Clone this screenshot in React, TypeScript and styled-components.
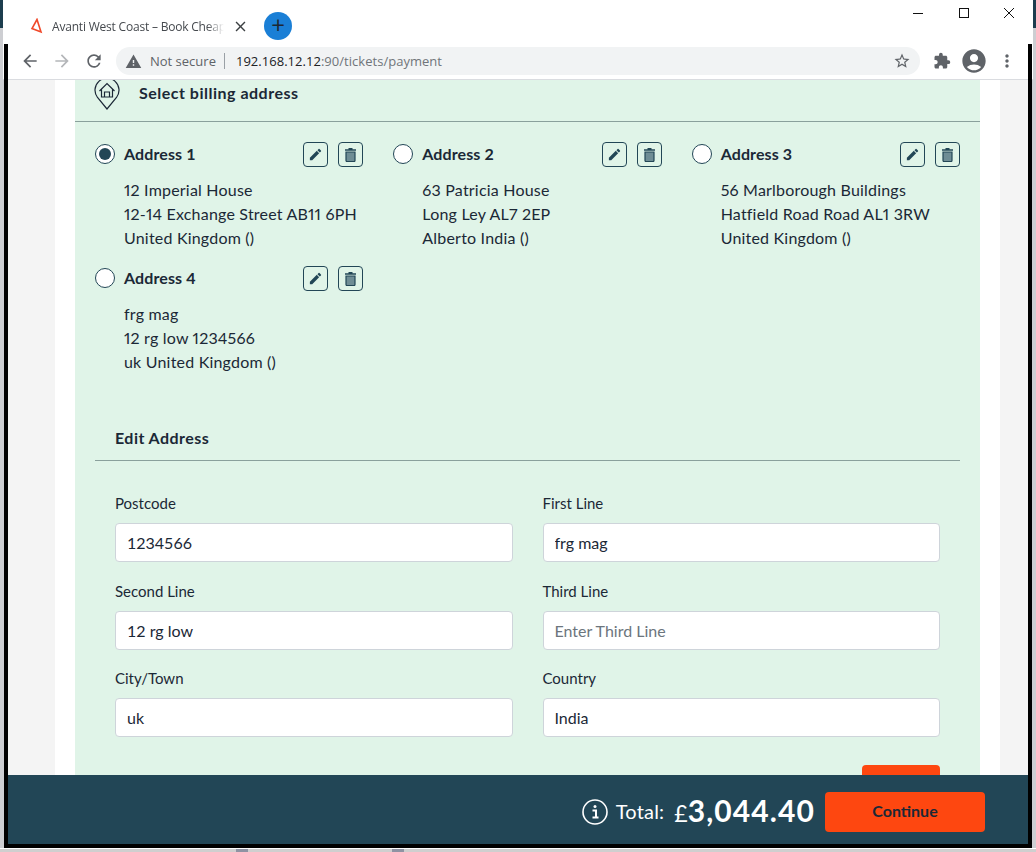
import { createGlobalStyle, styled } from "styled-components";
import {
  MdAccountCircle,
  MdArrowBack,
  MdArrowForward,
  MdClose,
  MdEdit,
  MdExtension,
  MdMoreVert,
  MdRefresh,
  MdStarBorder,
  MdWarning,
} from "react-icons/md";

const GlobalStyle = createGlobalStyle`
  html, body {
    margin: 0;
    padding: 0;
    overflow: hidden;
  }
  * {
    box-sizing: border-box;
  }
`;

const Screen = styled.div`
  position: relative;
  width: 1036px;
  height: 852px;
  overflow: hidden;
  padding: 0 3px;
  display: flex;
  flex-flow: column;
  background: linear-gradient(#1c3d4e 0 28px, #cdced2 28px);
  font-family: Lato, "Liberation Sans", sans-serif;
  color: #1b2836;
`;

/* black window edge, sits over the browser chrome */
const WindowEdge = styled.div`
  position: absolute;
  z-index: 5;
  top: 44px;
  left: 4px;
  width: 1028px;
  height: 804px;
  border: 4px solid #000;
  border-top: none;
  pointer-events: none;
`;

const Chrome = styled.div`
  height: 80px;
  flex: none;
  background: #fff;
  border-bottom: 1px solid #dadce0;
  display: flex;
  flex-flow: column;
`;
const TitleBar = styled.div`
  height: 47px;
  flex: none;
  display: flex;
  align-items: flex-start;
  padding-left: 27px;
`;
const Tab = styled.div`
  width: 220px;
  height: 20px;
  margin-top: 16px;
  display: flex;
  align-items: center;
  gap: 8px;
  font-family: "Open Sans", sans-serif;
  font-size: 12px;
  color: #45494e;
`;
const TabTitle = styled.span`
  width: 172px;
  flex: none;
  overflow: hidden;
  white-space: nowrap;
  letter-spacing: -0.2px;
  -webkit-mask-image: linear-gradient(90deg, #000 90%, transparent);
  mask-image: linear-gradient(90deg, #000 90%, transparent);
`;
const TabClose = styled.span`
  display: flex;
  color: #3c4043;
  font-size: 17px;
`;
const NewTab = styled.div`
  width: 28px;
  height: 28px;
  margin: 12px 0 0 14px;
  border-radius: 50%;
  background: #1a7fd6;
  color: #1d2733;
  font-family: "Open Sans", sans-serif;
  font-size: 24px;
  line-height: 26px;
  text-align: center;
`;
const WindowControls = styled.div`
  margin-left: auto;
  width: 138px;
  height: 26px;
  display: flex;
  align-items: center;
  padding-left: 17px;
  gap: 33.5px;
`;
const NavBar = styled.div`
  height: 28px;
  flex: none;
  display: flex;
  align-items: center;
  padding-left: 17px;
  color: #5f6368;
`;
const NavButton = styled.span<{ $muted?: boolean }>`
  width: 32px;
  display: flex;
  font-size: 20px;
  color: ${(p) => (p.$muted ? "#b4b6b9" : "#5f6368")};
`;
const Omnibox = styled.div`
  width: 804px;
  height: 28px;
  flex: none;
  padding: 0 9px;
  border-radius: 14px;
  background: #f1f3f4;
  display: flex;
  align-items: center;
  font-family: "Open Sans", sans-serif;
  font-size: 13px;
  color: #5f6368;
`;
const NotSecure = styled.span`
  margin-left: 8px;
  padding-right: 8px;
  border-right: 1px solid #9aa0a6;
  line-height: 16px;
`;
const Url = styled.span`
  margin-left: 11px;
  letter-spacing: 0.03px;
  color: #70757a;
  b {
    font-weight: 400;
    color: #202124;
  }
`;
const Star = styled.span`
  margin-left: auto;
  display: flex;
  font-size: 18px;
`;
const Toolbar = styled.div`
  display: flex;
  align-items: center;
  margin-left: 13px;
  gap: 9px;
  font-size: 18px;
`;
const Avatar = styled.span`
  display: flex;
  font-size: 28px;
`;
const MenuDots = styled.span`
  display: flex;
  font-size: 20px;
`;

const Viewport = styled.div`
  flex: 1;
  min-height: 0;
  margin: 0 5px;
  padding: 0 28px 0 47px;
  background: #f4f4f4;
  overflow: hidden;
`;
const Sheet = styled.div`
  height: 100%;
  background: #fff;
  padding: 0 20px;
`;
const Panel = styled.div`
  height: 100%;
  background: #e0f4e8;
  overflow: hidden;
`;
const PanelHeading = styled.div`
  height: 42px;
  padding-left: 19px;
  display: flex;
  align-items: flex-start;
  border-bottom: 1px solid #8aa09c;
  font-size: 16px;
  font-weight: 700;
`;
const PinIcon = styled.svg`
  width: 26px;
  height: 31px;
  margin-top: -1px;
  flex: none;
`;
const HeadingText = styled.span`
  margin: 1px 0 0 19px;
  line-height: 24px;
  letter-spacing: 0.5px;
`;
const AddressGrid = styled.div`
  padding: 20px 20px 0;
  display: grid;
  grid-template-columns: repeat(3, minmax(0, 1fr));
  column-gap: 30px;
  row-gap: 16px;
`;
const AddressCard = styled.div`
  height: 108px;
`;
const AddressHead = styled.div`
  height: 25px;
  display: flex;
  align-items: center;
`;
const Radio = styled.span<{ $checked?: boolean }>`
  width: 20px;
  height: 20px;
  margin-bottom: 1px;
  flex: none;
  border: 1px solid #224656;
  border-radius: 50%;
  background: #fff;
  display: flex;
  align-items: center;
  justify-content: center;
  &::after {
    content: "";
    width: 12px;
    height: 12px;
    border-radius: 50%;
    background: ${(p) => (p.$checked ? "#224656" : "transparent")};
  }
`;
const AddressName = styled.span`
  margin: 0 0 2px 9px;
  font-size: 16px;
  font-weight: 700;
  letter-spacing: 0.1px;
`;
const ButtonGroup = styled.div`
  margin-left: auto;
  display: flex;
  gap: 10px;
`;
const IconButton = styled.span`
  width: 25px;
  height: 25px;
  border: 1px solid #224656;
  border-radius: 4px;
  display: flex;
  align-items: center;
  justify-content: center;
  color: #224656;
  font-size: 15px;
`;
const AddressLines = styled.div`
  margin: 11px 0 0 29px;
  font-size: 16px;
  line-height: 24px;
  letter-spacing: 0.2px;
  font-variant-numeric: proportional-nums;
  white-space: nowrap;
`;
const EditHeading = styled.div`
  margin: 43px 20px 0;
  height: 44px;
  padding: 9px 20px 0;
  border-bottom: 1px solid #8aa09c;
  font-size: 16px;
  font-weight: 700;
  line-height: 24px;
  letter-spacing: 0.45px;
`;
const FormGrid = styled.div`
  padding: 32px 40px 0;
  display: grid;
  grid-template-columns: 1fr 1fr;
  column-gap: 30px;
  row-gap: 18.5px;
`;
const Field = styled.label`
  display: flex;
  flex-flow: column;
  gap: 9px;
  font-size: 15px;
  line-height: 21px;
`;
const TextInput = styled.input`
  width: 100%;
  height: 39px;
  padding: 0 11px;
  border: 1px solid #ced4da;
  border-radius: 4px;
  background: #fff;
  outline: none;
  font-family: inherit;
  font-size: 16px;
  color: #1b2836;
  &::placeholder {
    color: #6c757d;
    opacity: 1;
  }
`;
const FormActions = styled.div`
  padding: 28px 40px 0;
  display: flex;
  justify-content: flex-end;
`;
const SaveButton = styled.div`
  width: 78px;
  height: 40px;
  border-radius: 4px;
  background: #fe4710;
`;

const Footer = styled.div`
  height: 69px;
  flex: none;
  margin: 0 5px;
  padding: 3px 43px 0 0;
  background: #224656;
  color: #fff;
  display: flex;
  align-items: center;
  justify-content: flex-end;
`;
const InfoIcon = styled.svg`
  width: 26px;
  height: 26px;
  margin-top: 2px;
  flex: none;
`;
const TotalLabel = styled.span`
  margin-left: 8px;
  font-size: 20px;
  letter-spacing: 0.2px;
`;
const Amount = styled.span`
  margin: 0 0 3px 10px;
  font-size: 30px;
  font-weight: 700;
  letter-spacing: 1.1px;
  small {
    font-size: 23px;
    font-weight: 400;
    letter-spacing: 0;
  }
`;
const ContinueButton = styled.div`
  width: 160px;
  height: 40px;
  margin: 2px 0 0 10px;
  border-radius: 4px;
  background: #fe4710;
  color: #1b2836;
  font-size: 16px;
  font-weight: 700;
  line-height: 38px;
  text-align: center;
`;
const BottomSliver = styled.div`
  height: 4px;
  flex: none;
  margin: 4px -3px 0;
  border-top: 1px solid #fff;
  background: linear-gradient(
    90deg,
    #cfcfcf 236px,
    #8f93a3 236px 248px,
    #cfcfcf 248px 392px,
    #8f93a3 392px 404px,
    #cfcfcf 404px
  );
`;

const addresses = [
  { name: "Address 1", lines: ["12 Imperial House", "12-14 Exchange Street AB11 6PH", "United Kingdom ()"], checked: true },
  { name: "Address 2", lines: ["63 Patricia House", "Long Ley AL7 2EP", "Alberto India ()"] },
  { name: "Address 3", lines: ["56 Marlborough Buildings", "Hatfield Road Road AL1 3RW", "United Kingdom ()"] },
  { name: "Address 4", lines: ["frg mag", "12 rg low 1234566", "uk United Kingdom ()"] },
];

const fields = [
  { label: "Postcode", value: "1234566" },
  { label: "First Line", value: "frg mag" },
  { label: "Second Line", value: "12 rg low" },
  { label: "Third Line", value: "", placeholder: "Enter Third Line" },
  { label: "City/Town", value: "uk" },
  { label: "Country", value: "India" },
];

const TrashIcon = () => (
  <svg width="13" height="15" viewBox="0 0 13 15">
    <path d="M4.500 1h4v1.200h3.500v1.600H1V2.200h3.500z" fill="#224656" />
    <path d="M2 5h9v8.500a1 1 0 0 1-1 1H3a1 1 0 0 1-1-1z" fill="#6f8d95" stroke="#224656" strokeWidth="1.2" />
  </svg>
);

const App = () => {
  return (
    <Screen>
      <GlobalStyle />
      <WindowEdge />
      <Chrome>
        <TitleBar>
          <Tab>
            <svg width="14" height="16" viewBox="0 0 14 16">
              <path d="M7 1.500 2 10.500l9 3.500z" fill="none" stroke="#f0492a" strokeWidth="1.6" />
            </svg>
            <TabTitle>Avanti West Coast – Book Cheap Train Tickets</TabTitle>
            <TabClose>
              <MdClose />
            </TabClose>
          </Tab>
          <NewTab>+</NewTab>
          <WindowControls>
            <svg width="12" height="12" viewBox="0 0 12 12">
              <path d="M1 6.500h10" stroke="#111" strokeWidth="1" />
            </svg>
            <svg width="12" height="12" viewBox="0 0 12 12">
              <rect x="1.500" y="1.500" width="9" height="9" fill="none" stroke="#111" />
            </svg>
            <svg width="12" height="12" viewBox="0 0 12 12">
              <path d="M1 1l10 10M11 1 1 11" stroke="#111" strokeWidth="1" />
            </svg>
          </WindowControls>
        </TitleBar>
        <NavBar>
          <NavButton>
            <MdArrowBack />
          </NavButton>
          <NavButton $muted>
            <MdArrowForward />
          </NavButton>
          <NavButton>
            <MdRefresh />
          </NavButton>
          <Omnibox>
            <MdWarning size={17} />
            <NotSecure>Not secure</NotSecure>
            <Url>
              <b>192.168.12.12</b>:90/tickets/payment
            </Url>
            <Star>
              <MdStarBorder />
            </Star>
          </Omnibox>
          <Toolbar>
            <MdExtension />
            <Avatar>
              <MdAccountCircle />
            </Avatar>
            <MenuDots>
              <MdMoreVert />
            </MenuDots>
          </Toolbar>
        </NavBar>
      </Chrome>

      <Viewport>
        <Sheet>
          <Panel>
            <PanelHeading>
              <PinIcon viewBox="0 0 26 31" fill="none" stroke="#1b2836" strokeWidth="1.2">
                <path d="M13 30 3.500 18.500A12 12 0 1 1 22.500 18.500z" />
                <path d="M5.500 12 13 4.500l7.500 7.500M7.500 10.500V18h11v-7.500M10.500 18v-5h5v5" />
              </PinIcon>
              <HeadingText>Select billing address</HeadingText>
            </PanelHeading>
            <AddressGrid>
              {addresses.map((a) => (
                <AddressCard key={a.name}>
                  <AddressHead>
                    <Radio $checked={a.checked} />
                    <AddressName>{a.name}</AddressName>
                    <ButtonGroup>
                      <IconButton>
                        <MdEdit />
                      </IconButton>
                      <IconButton>
                        <TrashIcon />
                      </IconButton>
                    </ButtonGroup>
                  </AddressHead>
                  <AddressLines>
                    {a.lines.map((l) => (
                      <div key={l}>{l}</div>
                    ))}
                  </AddressLines>
                </AddressCard>
              ))}
            </AddressGrid>
            <EditHeading>Edit Address</EditHeading>
            <FormGrid>
              {fields.map((f) => (
                <Field key={f.label}>
                  {f.label}
                  <TextInput defaultValue={f.value} placeholder={f.placeholder} />
                </Field>
              ))}
            </FormGrid>
            <FormActions>
              <SaveButton />
            </FormActions>
          </Panel>
        </Sheet>
      </Viewport>

      <Footer>
        <InfoIcon viewBox="0 0 26 26" fill="none" stroke="#fff">
          <circle cx="13" cy="13" r="12" strokeWidth="1.6" />
          <circle cx="13" cy="7.500" r="1.500" fill="#fff" stroke="none" />
          <path d="M10.500 11.500H14v7M10.500 18.500h6" strokeWidth="2" />
        </InfoIcon>
        <TotalLabel>Total:</TotalLabel>
        <Amount>
          <small>£</small>3,044.40
        </Amount>
        <ContinueButton>Continue</ContinueButton>
      </Footer>
      <BottomSliver />
    </Screen>
  );
};

export default App;
